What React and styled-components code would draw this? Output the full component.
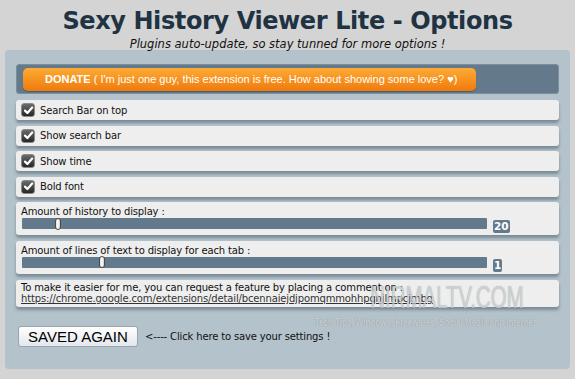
import styled, { createGlobalStyle } from 'styled-components'

const GlobalStyle = createGlobalStyle`
    body {
        margin: 0;
        background: #d4d4d4;
        font-family: "DejaVu Sans", Verdana, sans-serif;
    }
`

const options = [
    { label: 'Search Bar on top', checked: true },
    { label: 'Show search bar', checked: true },
    { label: 'Show time', checked: true },
    { label: 'Bold font', checked: true },
]

const sliders = [
    { label: 'Amount of history to display :', value: 20, min: 0, max: 280 },
    { label: 'Amount of lines of text to display for each tab :', value: 1, min: 0, max: 6 },
]

const Check = () => (
    <CheckBox>
        <svg width="11" height="11" viewBox="0 0 11 11">
            <path d="M2 5.6 L4.4 8 L9.2 2.6" fill="none" stroke="#fff" strokeWidth="2.2" strokeLinecap="round" strokeLinejoin="round" />
        </svg>
    </CheckBox>
)

const App = () => {
    return (
        <>
        <GlobalStyle />
        <Page>
            <Header>
                <h1>Sexy History Viewer Lite - Options</h1>
                <p>Plugins auto-update, so stay tunned for more options !</p>
            </Header>
            <Panel>
                <DonateBar>
                    <DonateButton>
                        <b>DONATE</b> ( I'm just one guy, this extension is free. How about showing some love? ♥)
                    </DonateButton>
                </DonateBar>
                <List>
                    {options.map((o) => (
                        <CheckRow key={o.label}>
                            <Check />
                            <span>{o.label}</span>
                        </CheckRow>
                    ))}
                    {sliders.map((s) => (
                        <SliderRow key={s.label}>
                            <div>{s.label}</div>
                            <SliderLine>
                                <Track>
                                    <Thumb style={{ left: `${((s.value - s.min) / (s.max - s.min)) * 100}%` }} />
                                </Track>
                                <Badge>{s.value}</Badge>
                            </SliderLine>
                        </SliderRow>
                    ))}
                    <TextRow>
                        To make it easier for me, you can request a feature by placing a comment on :<br />
                        <a href="#">https://chrome.google.com/extensions/detail/bcennaiejdjpomqmmohhpqnjlmpcjmbg</a>
                    </TextRow>
                </List>
                <SaveLine>
                    <SaveButton>SAVED AGAIN</SaveButton>
                    <span>&lt;---- Click here to save your settings !</span>
                </SaveLine>
            </Panel>
            <Watermark>
                <strong>NIRMALTV.COM</strong>
                <small>Tech Tips, Windows, Freewares, Social Media and Internet</small>
            </Watermark>
        </Page>
        </>
    );
}

export default App

const Page = styled.div`
    position: relative;
    width: 575px;
    height: 379px;
    overflow: hidden;
`

const Header = styled.header`
    text-align: center;
    padding-top: 7px;
    h1 {
        margin: 0;
        font-size: 24px;
        line-height: 28px;
        font-weight: bold;
        letter-spacing: -0.4px;
        color: #1f3343;
    }
    p {
        margin: 3px 0 0;
        font-size: 11.5px;
        line-height: 12px;
        font-style: italic;
        color: #111;
    }
`

const Panel = styled.main`
    margin: 0 5px;
    background: #b3c2cb;
    border-radius: 4px;
    padding: 14px 11px 22px 11px;
`

const DonateBar = styled.div`
    height: 30px;
    box-sizing: border-box;
    background: #64798b;
    border: 1px solid #7b8e9c;
    border-radius: 3px;
    padding: 3px 0 0 6px;
`

const DonateButton = styled.div`
    width: 453px;
    height: 23px;
    box-sizing: border-box;
    border-radius: 5px;
    background: linear-gradient(#fdab35, #f07a0c);
    box-shadow: 0 1px 1px rgba(0, 0, 0, 0.25);
    color: #fff;
    font-family: "Liberation Sans", Arial, sans-serif;
    font-size: 11px;
    line-height: 23px;
    padding-left: 22px;
    white-space: nowrap;
    b {
        font-weight: bold;
    }
`

const List = styled.div`
    display: flex;
    flex-direction: column;
    gap: 5.6px;
    margin-top: 6px;
`

const Row = styled.div`
    background: #eeeeee;
    border-radius: 3px;
    box-shadow: 0 3px 3px rgba(70, 85, 95, 0.5);
    font-size: 10px;
    letter-spacing: -0.15px;
    color: #111;
`

const CheckRow = styled(Row)`
    height: 20px;
    display: flex;
    align-items: center;
    gap: 5px;
    padding-left: 5px;
`

const CheckBox = styled.span`
    width: 14px;
    height: 14px;
    box-sizing: border-box;
    border: 1px solid #8a8a8a;
    border-radius: 3px;
    background: linear-gradient(#6b6b6b, #262626);
    display: flex;
    align-items: center;
    justify-content: center;
`

const SliderRow = styled(Row)`
    height: 33px;
    box-sizing: border-box;
    padding: 3px 5px 0;
    line-height: 13px;
`

const SliderLine = styled.div`
    display: flex;
    align-items: flex-start;
    gap: 6px;
    padding-left: 1px;
`

const Track = styled.div`
    position: relative;
    width: 465px;
    height: 11px;
    background: #627a8c;
    border-radius: 1px;
`

const Thumb = styled.span`
    position: absolute;
    top: -0.5px;
    width: 6px;
    height: 12px;
    box-sizing: border-box;
    border: 1px solid #4a4a4a;
    border-radius: 3px;
    background: linear-gradient(90deg, #ddd, #fff 50%, #ccc);
`

const Badge = styled.span`
    margin-top: 2px;
    height: 13px;
    padding: 0 1px;
    background: #627a8c;
    border-radius: 2px;
    color: #fff;
    font-weight: bold;
    font-size: 10.5px;
    line-height: 13px;
    letter-spacing: 0;
`

const TextRow = styled(Row)`
    height: 27px;
    box-sizing: border-box;
    padding: 2px 5px 0;
    line-height: 11.5px;
    a {
        color: #333;
    }
`

const SaveLine = styled.div`
    display: flex;
    align-items: center;
    gap: 7px;
    margin-top: 19px;
    padding-left: 2px;
    font-size: 10px;
    letter-spacing: -0.15px;
    color: #111;
`

const SaveButton = styled.button`
    width: 120px;
    height: 21px;
    border: 1px solid #9aa4ab;
    border-radius: 3px;
    background: linear-gradient(#ffffff, #e3e7ec);
    font-family: "Liberation Sans", Arial, sans-serif;
    font-size: 15px;
    line-height: 19px;
    color: #000;
    padding: 0;
`

const Watermark = styled.div`
    position: absolute;
    left: 300px;
    top: 282px;
    width: 250px;
    display: flex;
    flex-direction: column;
    align-items: center;
    pointer-events: none;
    font-family: "Liberation Sans", Arial, sans-serif;
    color: rgba(245, 245, 245, 0.6);
    text-shadow: 0 0 1px rgba(80, 90, 100, 0.6);
    strong {
        font-size: 32px;
        line-height: 31px;
        font-weight: normal;
        transform: scaleX(0.64);
        margin-left: 44px;
    }
    small {
        margin-top: 4px;
        font-size: 10px;
        font-weight: bold;
        white-space: nowrap;
        transform: scaleX(0.8);
    }
`
